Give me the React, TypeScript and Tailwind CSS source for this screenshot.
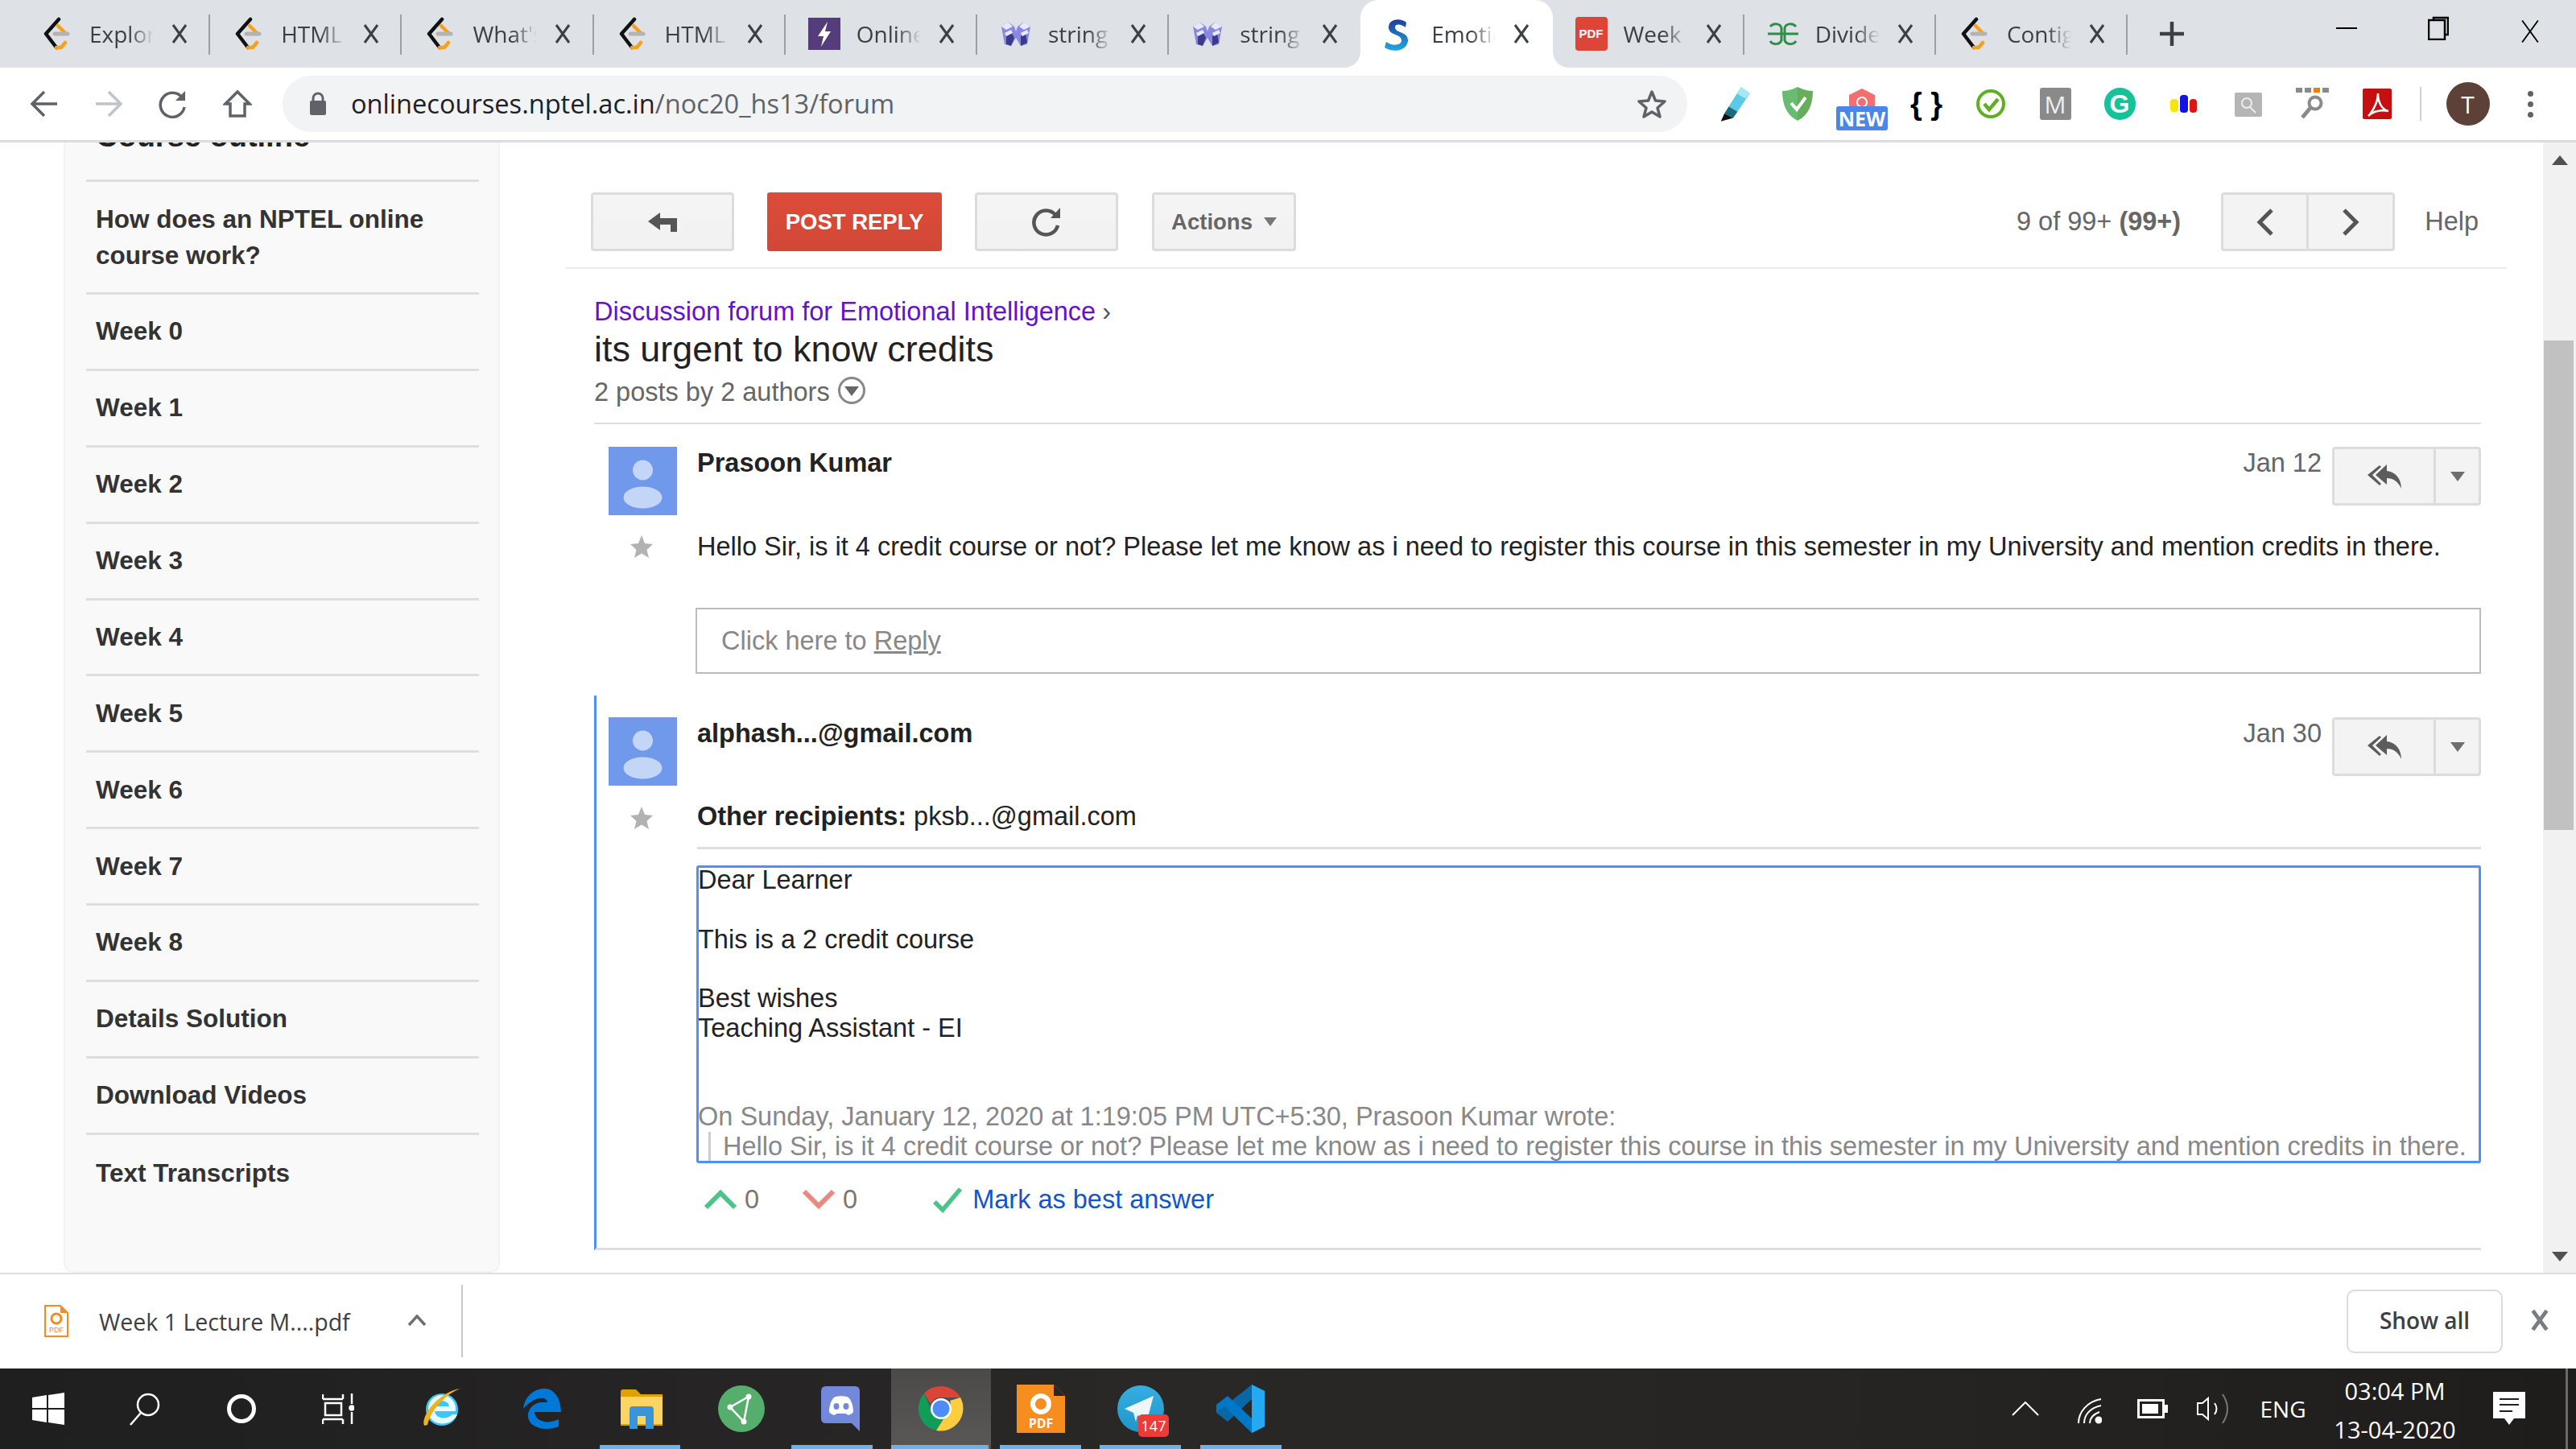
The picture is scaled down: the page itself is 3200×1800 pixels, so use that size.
import React from "react";

const Lc = () => (
  <svg width="38" height="42" viewBox="0 0 38 42" className="shrink-0">
    <path d="M22 3 L6 21 L19 38" fill="none" stroke="#111" strokeWidth="4.5" strokeLinecap="round" strokeLinejoin="round" />
    <path d="M19 38 L25 38 L30 32 M21 11 L30 20" fill="none" stroke="#f89f1b" strokeWidth="4.5" strokeLinecap="round" strokeLinejoin="round" />
    <path d="M17 21 H33" stroke="#b3b3b3" strokeWidth="5" strokeLinecap="round" />
  </svg>
);
const Bolt = () => (
  <svg width="40" height="40" viewBox="0 0 40 40" className="shrink-0">
    <rect width="40" height="40" fill="#553c7b" />
    <path d="M24 5 L12 23 H19 L16 36 L28 17 H21 Z" fill="#fff" />
  </svg>
);
const Str = () => (
  <svg width="40" height="34" viewBox="0 0 40 34" className="shrink-0">
    <path d="M2 8 L10 2 L18 8 L20 14 L22 8 L30 2 L38 8 L34 30 L26 32 L20 22 L14 32 L6 30 Z" fill="#8a87e0" />
    <path d="M8 20 L14 14 L18 22 L14 32 L8 30 Z M26 20 L32 16 L34 28 L26 32 Z" fill="#3b3a8c" />
    <path d="M2 8 L10 2 L16 8 L8 12 Z M24 8 L30 2 L38 8 L30 12 Z M6 16 L14 12 L16 16 L8 20 Z M26 16 L34 12 L36 16 L28 20 Z" fill="#e8e8fb" />
  </svg>
);
const SIcon = () => (
  <svg width="34" height="44" viewBox="0 0 34 44" className="shrink-0">
    <defs>
      <linearGradient id="sg" x1="0" y1="0" x2="0" y2="1">
        <stop offset="0" stopColor="#1f3f9a" />
        <stop offset="1" stopColor="#1fa8e0" />
      </linearGradient>
    </defs>
    <path d="M29 8 C22 2 8 3 7 13 C6 25 24 21 23 31 C22 37 10 37 4 32 L2 39 C10 45 29 45 31 31 C32 18 14 22 15 13 C16 9 23 10 28 14 Z" fill="url(#sg)" />
  </svg>
);
const PdfIcon = () => (
  <div className="w-[40px] h-[42px] shrink-0 rounded-[4px] bg-[#dd4637] flex items-center justify-center text-white text-[15px] font-bold font-['Liberation_Sans','Arial',sans-serif]">PDF</div>
);
const Gfg = () => (
  <svg width="40" height="32" viewBox="0 0 40 32" className="shrink-0" fill="none" stroke="#2f8d46" strokeWidth="3">
    <path d="M1 16 H39" />
    <path d="M4 7 C8 2 17 3 18 9 V24 C16 30 7 30 4 25" />
    <path d="M36 7 C32 2 23 3 22 9 V24 C24 30 33 30 36 25" />
  </svg>
);

const tabs: [string, React.ReactNode, boolean][] = [
  ["Explore", <Lc />, true],
  ["HTML", <Lc />, true],
  ["What's", <Lc />, true],
  ["HTML", <Lc />, true],
  ["Online", <Bolt />, true],
  ["string", <Str />, true],
  ["string", <Str />, false],
  ["Emotional", <SIcon />, false],
  ["Week", <PdfIcon />, true],
  ["Divide", <Gfg />, true],
  ["Contig", <Lc />, true],
];

const CloseX = ({ s = 20, c = "#3c4043", w = 3 }: { s?: number; c?: string; w?: number }) => (
  <svg width={s} height={s + 6} viewBox="0 0 20 26" className="shrink-0">
    <path d="M2 2 L18 24 M18 2 L2 24" stroke={c} strokeWidth={w} fill="none" />
  </svg>
);

const Tab = ({ title, icon, sep, active }: { title: string; icon: React.ReactNode; sep: boolean; active: boolean }) => (
  <div className={"relative w-[238.2px] h-[84px] shrink-0 flex items-center " + (active ? "bg-white rounded-t-[22px]" : "")}>
    {active && (
      <>
        <svg width="22" height="22" viewBox="0 0 22 22" className="absolute left-[-22px] bottom-0">
          <path d="M22 0 V22 H0 C14 22 22 14 22 0 Z" fill="#fff" />
        </svg>
        <svg width="22" height="22" viewBox="0 0 22 22" className="absolute right-[-22px] bottom-0">
          <path d="M0 0 V22 H22 C8 22 0 14 0 0 Z" fill="#fff" />
        </svg>
      </>
    )}
    <div className="w-[88px] pl-[28px] shrink-0 flex items-center">{icon}</div>
    <div className="w-[80px] overflow-hidden whitespace-nowrap text-[28px] text-[#3c4043] font-['Open_Sans',sans-serif] [mask-image:linear-gradient(90deg,#000_62%,transparent_100%)]">{title}</div>
    <div className="ml-[22px]">
      <CloseX />
    </div>
    {sep && <div className="absolute right-0 top-[18px] w-[2px] h-[50px] bg-[#9aa0a6]" />}
  </div>
);

const Ext = ({ children, w = 80 }: { children: React.ReactNode; w?: number }) => (
  <div className="h-[90px] flex items-center justify-center shrink-0" style={{ width: w }}>
    {children}
  </div>
);

const Toolbar = () => (
  <div className="h-[90px] flex items-center bg-white shrink-0">
    <div className="w-[351px] flex shrink-0 pl-[15px]">
      <div className="w-[80px] flex justify-center">
        <svg width="36" height="36" viewBox="0 0 36 36" fill="none" stroke="#5f6368" strokeWidth="3.5">
          <path d="M34 18 H4 M18 3 L3 18 L18 33" />
        </svg>
      </div>
      <div className="w-[80px] flex justify-center">
        <svg width="36" height="36" viewBox="0 0 36 36" fill="none" stroke="#c0c3c7" strokeWidth="3.5">
          <path d="M2 18 H32 M18 3 L33 18 L18 33" />
        </svg>
      </div>
      <div className="w-[79px] flex justify-center">
        <svg width="36" height="36" viewBox="0 0 36 36" fill="none">
          <path d="M29 10 A15 15 0 1 0 32 22" stroke="#5f6368" strokeWidth="3.5" />
          <path d="M33 2 V14 H21 Z" fill="#5f6368" />
        </svg>
      </div>
      <div className="w-[81px] flex justify-center">
        <svg width="36" height="36" viewBox="0 0 36 36" fill="none" stroke="#5f6368" strokeWidth="3.5">
          <path d="M3 18 L18 3 L33 18 H27 V33 H9 V18 Z" />
        </svg>
      </div>
    </div>
    <div className="w-[1745px] h-[70px] shrink-0 rounded-[35px] bg-[#f1f3f4] flex items-center pl-[33px]">
      <svg width="22" height="30" viewBox="0 0 22 30" className="shrink-0">
        <rect x="1" y="11" width="20" height="18" rx="2" fill="#5f6368" />
        <path d="M5 12 V8 A6 6 0 0 1 17 8 V12" fill="none" stroke="#5f6368" strokeWidth="3" />
      </svg>
      <div className="ml-[30px] text-[32.6px] text-[#202124] font-['Open_Sans',sans-serif] whitespace-nowrap">
        onlinecourses.nptel.ac.in<span className="text-[#5f6368]">/noc20_hs13/forum</span>
      </div>
      <div className="ml-auto mr-[25px]">
        <svg width="38" height="36" viewBox="0 0 38 36">
          <path d="M19 3 L23.5 14 L35 15 L26 23 L29 34 L19 28 L9 34 L12 23 L3 15 L14.5 14 Z" fill="none" stroke="#5f6368" strokeWidth="3.5" strokeLinejoin="round" />
        </svg>
      </div>
    </div>
    <div className="flex pl-[17px]">
      <Ext w={80}>
        <svg width="48" height="48" viewBox="0 0 44 44">
          <path d="M31 3 L41 10 L27 31 L17 25 Z" fill="#5cc9e6" />
          <path d="M31 3 L41 10 L36 16 L26 10 Z" fill="#a4e7f5" />
          <path d="M17 25 L27 31 L22 38 L12 33 Z" fill="#1b6b80" />
          <path d="M12 33 L22 38 L8 42 Z" fill="#111" />
        </svg>
      </Ext>
      <Ext w={80}>
        <svg width="40" height="44" viewBox="0 0 40 44">
          <path d="M20 1 C12 5 6 6 1 6 C1 22 6 36 20 43 Z" fill="#68bc71" />
          <path d="M20 1 C28 5 34 6 39 6 C39 22 34 36 20 43 Z" fill="#67ae5c" />
          <path d="M12 21 L19 29 L30 14" stroke="#fff" strokeWidth="4" fill="none" />
        </svg>
      </Ext>
      <Ext w={80}>
        <div className="flex flex-col items-center mt-[14px]">
          <svg width="38" height="22" viewBox="0 0 38 22">
            <path d="M19 0 L35 8 V22 H3 V8 Z" fill="#f36f6f" />
            <circle cx="19" cy="17" r="6" fill="none" stroke="#fff" strokeWidth="2" />
          </svg>
          <div className="w-[64px] h-[30px] bg-[#4a86e8] rounded-[3px] text-white text-[25px] leading-[30px] font-bold text-center font-['Open_Sans',sans-serif]">NEW</div>
        </div>
      </Ext>
      <Ext w={80}>
        <span className="text-[38px] leading-[40px] text-black font-['Liberation_Sans',sans-serif] font-bold">{"{ }"}</span>
      </Ext>
      <Ext w={80}>
        <svg width="38" height="38" viewBox="0 0 38 38">
          <circle cx="19" cy="19" r="16" fill="none" stroke="#5faf1e" strokeWidth="4" />
          <path d="M11 19 L17 26 L28 13" fill="none" stroke="#5faf1e" strokeWidth="4.5" />
        </svg>
      </Ext>
      <Ext w={80}>
        <div className="w-[39px] h-[40px] bg-[#8a8a8a] rounded-[3px] flex items-center justify-center text-[#eee] text-[30px] font-['Open_Sans',sans-serif]">M</div>
      </Ext>
      <Ext w={80}>
        <div className="w-[39px] h-[40px] bg-[#15c39a] rounded-full flex items-center justify-center text-white text-[32px] font-bold font-['Liberation_Sans',sans-serif]">G</div>
      </Ext>
      <Ext w={80}>
        <svg width="36" height="24" viewBox="0 0 36 24">
          <rect x="1" y="6" width="10" height="16" rx="4" fill="#f5e50c" />
          <rect x="13" y="1" width="10" height="22" rx="4" fill="#1414e0" />
          <rect x="25" y="6" width="9" height="17" rx="4" fill="#e01414" />
        </svg>
      </Ext>
      <Ext w={80}>
        <svg width="36" height="34" viewBox="0 0 36 34">
          <rect x="1" y="3" width="34" height="30" rx="2" fill="#b5b5b5" />
          <circle cx="16" cy="16" r="6" fill="none" stroke="#eee" strokeWidth="2" />
          <path d="M20 21 L27 28" stroke="#eee" strokeWidth="2" />
        </svg>
      </Ext>
      <Ext w={80}>
        <svg width="42" height="42" viewBox="0 0 42 42">
          <rect x="0" y="1" width="8" height="6" fill="#8a8a8a" />
          <rect x="11" y="1" width="8" height="6" fill="#8a8a8a" />
          <rect x="22" y="1" width="8" height="6" fill="#f57c00" />
          <rect x="33" y="1" width="8" height="6" fill="#8a8a8a" />
          <circle cx="24" cy="20" r="7.5" fill="none" stroke="#8a8a8a" strokeWidth="4" />
          <path d="M18 26 L8 38" stroke="#8a8a8a" strokeWidth="5" />
        </svg>
      </Ext>
      <Ext w={80}>
        <svg width="38" height="42" viewBox="0 0 38 42">
          <rect x="1" y="2" width="36" height="38" rx="2" fill="#c50f10" />
          <path d="M10 34 C16 26 20 16 20 8 C20 18 24 28 33 30 C24 28 14 30 8 36" fill="none" stroke="#fff" strokeWidth="2.5" />
        </svg>
      </Ext>
    </div>
    <div className="w-[2px] h-[42px] bg-[#d0d2d5] ml-[13px] shrink-0" />
    <div className="w-[115px] flex justify-center shrink-0">
      <div className="w-[54px] h-[54px] rounded-full bg-[#5d4037] flex items-center justify-center text-white text-[30px] font-['Open_Sans',sans-serif]">T</div>
    </div>
    <div className="flex flex-col gap-[6px] ml-[17px] shrink-0">
      <div className="w-[7px] h-[7px] rounded-full bg-[#5f6368]" />
      <div className="w-[7px] h-[7px] rounded-full bg-[#5f6368]" />
      <div className="w-[7px] h-[7px] rounded-full bg-[#5f6368]" />
    </div>
  </div>
);

const weeks = ["Week 0", "Week 1", "Week 2", "Week 3", "Week 4", "Week 5", "Week 6", "Week 7", "Week 8", "Details Solution", "Download Videos"];

const Sidebar = () => (
  <div className="ml-[79px] w-[542px] shrink-0 bg-[#f9f9f9] border-x-[2px] border-b-[2px] border-[#f2f2f2] rounded-b-[12px] overflow-hidden pl-[26px] pr-[24px] text-[#333] font-bold text-[31.5px] font-['Liberation_Sans',Arial,sans-serif]">
    <div className="mt-[-32px] h-[81px] border-b-[3px] border-[#dedede] pl-[12px] pt-[2px] text-[38px] leading-[45px] text-[#222]">Course outline</div>
    <div className="h-[140px] border-b-[3px] border-[#dedede] pl-[12px] flex items-center leading-[45px]">
      How does an NPTEL online course work?
    </div>
    {weeks.map((w, i) => (
      <div key={i} className="h-[94.9px] border-b-[3px] border-[#dedede] pl-[12px] flex items-center">{w}</div>
    ))}
    <div className="h-[94.9px] pl-[12px] flex items-center">Text Transcripts</div>
  </div>
);

const btn = "h-[73px] rounded-[4px] border-[3px] border-[#dcdcdc] bg-[linear-gradient(#f5f5f5,#f1f1f1)] flex items-center justify-center shrink-0";

const Avatar = () => (
  <svg width="85" height="85" viewBox="0 0 85 85" className="shrink-0">
    <rect width="85" height="85" fill="#7099ec" />
    <circle cx="42.5" cy="29" r="12.5" fill="#c4d6f7" />
    <ellipse cx="42.5" cy="63" rx="24" ry="13.5" fill="#c4d6f7" />
  </svg>
);
const Star = () => (
  <svg width="30" height="30" viewBox="0 0 30 30">
    <path d="M15 1 L19 11 L29 12 L21.5 19 L24 29 L15 23.5 L6 29 L8.5 19 L1 12 L11 11 Z" fill="#b2b2b2" />
  </svg>
);
const ReplyBtn = () => (
  <div className={"w-[185px] rounded-[4px] border-[3px] border-[#dcdcdc] h-[73px] bg-[#f3f3f3] flex shrink-0"}>
    <div className="w-[126px] flex items-center justify-center border-r-[3px] border-[#dcdcdc]">
      <svg width="46" height="34" viewBox="0 0 46 34" fill="#5c5c5c">
        <path d="M26 2 L12 15 L26 27 V19 C34 19 40 23 44 32 C44 20 37 11 26 10 Z" />
        <path d="M17 3 L2 15 L17 28 L19 26 L8 15 L19 5 Z" />
      </svg>
    </div>
    <div className="flex-1 flex items-center justify-center">
      <svg width="18" height="12" viewBox="0 0 18 12">
        <path d="M0 0 H18 L9 12 Z" fill="#6e6e6e" />
      </svg>
    </div>
  </div>
);

const Main = () => (
  <div className="ml-[82px] w-[2411px] shrink-0 pt-[62px] font-['Liberation_Sans',Arial,sans-serif] text-[32.5px] text-[#222]">
    <div className="h-[95px] border-b-[2px] border-[#ebebeb] pl-[31px] pr-[35px] flex items-start">
      <div className={btn + " w-[178px]"}>
        <svg width="38" height="26" viewBox="0 0 38 26">
          <path d="M16 1 L1 12 L16 23 V16 H29 V25 H37 V8 H16 Z" fill="#555" />
        </svg>
      </div>
      <div className="w-[217px] h-[73px] ml-[41px] rounded-[3px] bg-[linear-gradient(#dd4b39,#d14836)] text-white font-bold text-[27.5px] flex items-center justify-center shrink-0">POST REPLY</div>
      <div className={btn + " w-[178px] ml-[41px]"}>
        <svg width="38" height="38" viewBox="0 0 38 38" fill="none">
          <path d="M30 10 A15 15 0 1 0 33 23" stroke="#555" strokeWidth="4.5" />
          <path d="M36 1 V14 H24 Z" fill="#555" />
        </svg>
      </div>
      <div className={btn + " w-[179px] ml-[42px] gap-[14px] text-[27.5px] font-bold text-[#666]"}>
        Actions
        <svg width="16" height="11" viewBox="0 0 16 11">
          <path d="M0 0 H16 L8 11 Z" fill="#777" />
        </svg>
      </div>
      <div className="ml-auto h-[73px] flex items-center text-[#666]">
        9 of 99+&nbsp;<b>(99+)</b>
      </div>
      <div className="w-[216px] ml-[50px] h-[73px] rounded-[4px] border-[3px] border-[#dcdcdc] bg-[#f3f3f3] flex shrink-0">
        <div className="w-[106px] border-r-[3px] border-[#dcdcdc] flex items-center justify-center">
          <svg width="24" height="36" viewBox="0 0 24 36" fill="none" stroke="#555" strokeWidth="5">
            <path d="M20 3 L5 18 L20 33" />
          </svg>
        </div>
        <div className="flex-1 flex items-center justify-center">
          <svg width="24" height="36" viewBox="0 0 24 36" fill="none" stroke="#555" strokeWidth="5">
            <path d="M4 3 L19 18 L4 33" />
          </svg>
        </div>
      </div>
      <div className="ml-[37px] h-[73px] flex items-center text-[#666]">Help</div>
    </div>

    <div className="pl-[35px] pr-[32px]">
      <div className="mt-[35px] h-[37px] flex items-center text-[#6611cc] whitespace-nowrap">
        Discussion forum for Emotional Intelligence<span className="ml-[8px] text-[#555]">›</span>
      </div>
      <div className="mt-[3px] h-[50px] flex items-center text-[44.9px] text-[#222]">its urgent to know credits</div>
      <div className="mt-[8px] h-[40px] flex items-center text-[#666]">
        2 posts by 2 authors
        <svg width="36" height="36" viewBox="0 0 36 36" className="ml-[9px] mb-[4px]">
          <circle cx="18" cy="18" r="15.5" fill="#fff" stroke="#888" strokeWidth="3" />
          <path d="M9 13 H27 L18 25 Z" fill="#666" />
        </svg>
      </div>
      <div className="mt-[18px] border-t-[2px] border-[#dedede]" />

      <div className="flex pt-[28px]">
        <div className="w-[128px] pl-[18px] shrink-0 flex flex-col">
          <Avatar />
          <div className="mt-[24px] ml-[26px]">
            <Star />
          </div>
        </div>
        <div className="flex-1">
          <div className="h-[73px] flex items-start">
            <div className="h-[40px] flex items-center font-bold">Prasoon Kumar</div>
            <div className="ml-auto h-[40px] flex items-center text-[#666] mr-[13px]">Jan 12</div>
            <ReplyBtn />
          </div>
          <div className="mt-[31px] h-[40px] flex items-center whitespace-nowrap">Hello Sir, is it 4 credit course or not? Please let me know as i need to register this course in this semester in my University and mention credits in there.</div>
          <div className="mt-[56px] ml-[-2px] h-[82px] border-[2px] border-[#bbb] flex items-center pl-[30px] text-[#888]">
            Click here to&nbsp;<span className="underline">Reply</span>
          </div>
        </div>
      </div>

      <div className="mt-[27px] flex border-l-[3px] border-b-[3px] border-l-[#4d90fe] border-b-[#dedede] pt-[27px]">
        <div className="w-[125px] pl-[15px] shrink-0 flex flex-col">
          <Avatar />
          <div className="mt-[25px] ml-[26px]">
            <Star />
          </div>
        </div>
        <div className="flex-1">
          <div className="h-[73px] flex items-start">
            <div className="h-[40px] flex items-center font-bold">alphash...@gmail.com</div>
            <div className="ml-auto h-[40px] flex items-center text-[#666] mr-[13px]">Jan 30</div>
            <ReplyBtn />
          </div>
          <div className="mt-[30px] h-[40px] flex items-center">
            <b>Other recipients:</b>&nbsp;pksb...@gmail.com
          </div>
          <div className="mt-[18px] border-t-[3px] border-[#dedede]" />
          <div className="mt-[20px] ml-[-1px] h-[370px] border-[3px] border-[#4d90fe] rounded-[3px] overflow-hidden leading-[36.8px] whitespace-nowrap">
            <div className="mt-[-3px] ml-[-1px]">
              <div>Dear Learner</div>
              <div className="h-[36.8px]" />
              <div>This is a 2 credit course</div>
              <div className="h-[36.8px]" />
              <div>Best wishes</div>
              <div>Teaching Assistant - EI</div>
              <div className="h-[73.6px]" />
              <div className="text-[#888]">On Sunday, January 12, 2020 at 1:19:05 PM UTC+5:30, Prasoon Kumar wrote:</div>
              <div className="ml-[13px] border-l-[3px] border-[#ccc] pl-[15px] text-[#888]">Hello Sir, is it 4 credit course or not? Please let me know as i need to register this course in this semester in my University and mention credits in there.</div>
            </div>
          </div>
          <div className="mt-[25px] h-[40px] flex items-center text-[#777] mb-[40px]">
            <svg width="42" height="28" viewBox="0 0 42 28" className="ml-[8px]" fill="none" stroke="#4cc38a" strokeWidth="6">
              <path d="M3 24 L21 6 L39 24" />
            </svg>
            <span className="ml-[9px]">0</span>
            <svg width="42" height="28" viewBox="0 0 42 28" className="ml-[53px]" fill="none" stroke="#e88a80" strokeWidth="6">
              <path d="M3 4 L21 22 L39 4" />
            </svg>
            <span className="ml-[9px]">0</span>
            <svg width="38" height="34" viewBox="0 0 38 34" className="ml-[93px]" fill="none" stroke="#4cc38a" strokeWidth="5.5">
              <path d="M3 20 L13 30 L35 4" />
            </svg>
            <span className="ml-[12px] text-[#1155cc]">Mark as best answer</span>
          </div>
        </div>
      </div>
    </div>
  </div>
);

const Scrollbar = () => (
  <div className="ml-auto w-[41px] shrink-0 bg-[#f1f1f1] flex flex-col">
    <div className="h-[246px] pt-[16px] flex justify-center items-start">
      <svg width="20" height="12" viewBox="0 0 20 12">
        <path d="M10 0 L20 12 H0 Z" fill="#505050" />
      </svg>
    </div>
    <div className="h-[608px] ml-[1px] mr-[3px] bg-[#c1c1c1]" />
    <div className="flex-1 flex items-end justify-center pb-[14px]">
      <svg width="20" height="12" viewBox="0 0 20 12">
        <path d="M0 0 H20 L10 12 Z" fill="#505050" />
      </svg>
    </div>
  </div>
);

const DownloadBar = () => (
  <div className="h-[119px] shrink-0 border-t-[2px] border-[#dedfe3] bg-white flex items-center font-['Open_Sans',sans-serif]">
    <div className="w-[575px] h-[90px] border-r-[2px] border-[#c9c9c9] flex items-center pl-[55px] shrink-0 mt-[-2px]">
      <svg width="30" height="40" viewBox="0 0 30 40" className="shrink-0">
        <path d="M1 1 H20 L29 10 V39 H1 Z" fill="#fff" stroke="#f58a1f" strokeWidth="2" />
        <path d="M20 1 L29 10 H20 Z" fill="#f58a1f" />
        <circle cx="15" cy="17" r="6" fill="none" stroke="#f58a1f" strokeWidth="3" />
        <text x="15" y="34" textAnchor="middle" fontSize="9" fill="#f58a1f" fontFamily="Liberation Sans">PDF</text>
      </svg>
      <div className="ml-[38px] mt-[4px] text-[28.5px] text-[#3c4043] whitespace-nowrap">Week 1 Lecture M....pdf</div>
      <svg width="24" height="14" viewBox="0 0 24 14" className="ml-[71px] mt-[-2px]" fill="none" stroke="#6b6f73" strokeWidth="3.5">
        <path d="M2 13 L12 2 L22 13" />
      </svg>
    </div>
    <div className="ml-auto w-[194px] h-[79px] mt-[-1px] rounded-[10px] border-[2px] border-[#dadce0] flex items-center justify-center text-[28px] font-semibold text-[#3c4043] pb-[3px]">Show all</div>
    <div className="w-[91px] flex justify-center mt-[-4px]">
      <CloseX s={22} c="#7a7d80" w={4.5} />
    </div>
  </div>
);

const Task = ({ w = 124, children, className = "" }: { w?: number; children: React.ReactNode; className?: string }) => (
  <div className={"relative h-[100px] flex items-center justify-center shrink-0 " + className} style={{ width: w }}>
    {children}
  </div>
);
const Ind = ({ l = 12, w = 100 }: { l?: number; w?: number }) => (
  <div className="absolute bottom-0 h-[5px] bg-[#6fb1e4]" style={{ left: l, width: w }} />
);

const Taskbar = () => (
  <div className="h-[100px] shrink-0 flex text-white bg-[linear-gradient(90deg,#1f1f1f_0%,#2a2727_45%,#272424_70%,#1f1d1c_100%)] font-['Open_Sans',sans-serif]">
    <Task w={120}>
      <svg width="40" height="40" viewBox="0 0 40 40" fill="#fff">
        <path d="M0 6 L18 3 V19 H0 Z M20 3 L40 0 V19 H20 Z M0 21 H18 V37 L0 34 Z M20 21 H40 V40 L20 37 Z" />
      </svg>
    </Task>
    <Task w={119}>
      <svg width="40" height="42" viewBox="0 0 40 42" fill="none" stroke="#fff" strokeWidth="2.5">
        <circle cx="24" cy="16" r="13" />
        <path d="M15 26 L2 41" />
      </svg>
    </Task>
    <Task w={121}>
      <svg width="40" height="40" viewBox="0 0 40 40" fill="none">
        <circle cx="20" cy="20" r="15.5" stroke="#fff" strokeWidth="5" />
      </svg>
    </Task>
    <Task w={120}>
      <svg width="40" height="40" viewBox="0 0 40 40" fill="none" stroke="#fff" strokeWidth="2.5">
        <path d="M1 8 V2 M26 8 V2 M1 8 H26 M4 13 H24 V28 H4 Z M1 33 H26 M1 33 V39 M26 33 V39 M37 1 V14 M37 24 V39" />
        <circle cx="37" cy="19" r="2.5" fill="#fff" />
      </svg>
    </Task>
    <div className="w-[7px] shrink-0" />
    <Task>
      <svg width="54" height="54" viewBox="0 0 54 54">
        <circle cx="27" cy="28" r="20" fill="#3dc6f3" />
        <path d="M10 27 A17 17 0 0 1 44 27 V30 H18 C19 40 34 41 40 34 H46 C40 48 20 48 14 40 C10 36 10 30 10 27 Z M18 24 H36 C35 15 20 15 18 24 Z" fill="#e8fbff" />
        <path d="M5 48 C0 35 25 5 50 2 C38 5 14 25 9 47 Z" fill="#f0b11d" />
      </svg>
    </Task>
    <Task>
      <svg width="50" height="52" viewBox="0 0 50 52">
        <path d="M2 26 C4 10 16 1 28 1 C40 1 48 11 49 30 H16 C17 42 32 46 46 39 V48 C30 55 6 50 8 32 C10 24 16 19 24 18 H32 C31 10 16 10 2 26 Z" fill="#0078d7" />
      </svg>
    </Task>
    <Task>
      <svg width="54" height="50" viewBox="0 0 54 50">
        <path d="M1 4 Q1 1 4 1 H20 L26 7 H53 V46 H1 Z" fill="#e0a000" />
        <rect x="1" y="10" width="52" height="34" fill="#fcd462" />
        <path d="M12 50 V26 Q12 22 16 22 H38 Q42 22 42 26 V50 H32 V34 H22 V50 Z" fill="#3a95d8" />
        <rect x="22" y="34" width="10" height="10" fill="#fcd462" />
      </svg>
      <Ind l={10} w={100} />
    </Task>
    <Task>
      <svg width="60" height="60" viewBox="0 0 60 60">
        <circle cx="30" cy="30" r="29" fill="#56ae6c" />
        <path d="M16 28 L39 15 L33 46 Z" fill="none" stroke="#fff" strokeWidth="2.5" />
        <circle cx="16" cy="28" r="3.5" fill="#fff" />
        <circle cx="39" cy="15" r="3.5" fill="#fff" />
        <circle cx="33" cy="46" r="3.5" fill="#fff" />
      </svg>
    </Task>
    <Task>
      <svg width="50" height="56" viewBox="0 0 50 56">
        <path d="M6 0 H42 Q48 0 48 6 V56 L38 46 H6 Q0 46 0 40 V6 Q0 0 6 0 Z" fill="#7289da" />
        <path d="M10 32 C10 22 14 14 18 13 C22 12 28 12 32 13 C36 14 40 22 40 32 C36 37 32 36 31 34 H19 C18 36 14 37 10 32 Z" fill="#fff" />
        <ellipse cx="19" cy="25" rx="3.5" ry="4" fill="#7289da" />
        <ellipse cx="31" cy="25" rx="3.5" ry="4" fill="#7289da" />
      </svg>
      <Ind l={0} w={101} />
    </Task>
    <Task className="bg-[linear-gradient(180deg,#4c4a49,#5a5857)]">
      <svg width="56" height="56" viewBox="0 0 56 56">
        <path d="M28 0 A28 28 0 0 1 52 14 H28 A14 14 0 0 0 15 22 L7 9 A28 28 0 0 1 28 0 Z" fill="#db4437" />
        <path d="M7 9 L18 34 A14 14 0 0 0 31 41 L22 55 A28 28 0 0 1 7 9 Z" fill="#0f9d58" />
        <path d="M52 14 A28 28 0 0 1 22 55 L36 33 A14 14 0 0 0 39 18 Z" fill="#ffcd40" />
        <circle cx="28" cy="28" r="13" fill="#fff" />
        <circle cx="28" cy="28" r="10.5" fill="#4e8cf7" />
      </svg>
      <Ind l={0} w={121} />
    </Task>
    <Task>
      <svg width="60" height="60" viewBox="0 0 60 60">
        <path d="M0 0 H46 L60 14 V60 H0 Z" fill="#f68d1f" />
        <path d="M46 0 L60 14 H46 Z" fill="#2a2626" />
        <circle cx="30" cy="24" r="10" fill="none" stroke="#fff" strokeWidth="6" />
        <text x="30" y="54" textAnchor="middle" fontSize="16" fontWeight="700" fill="#fff" fontFamily="Open Sans">PDF</text>
      </svg>
      <Ind l={11} w={101} />
    </Task>
    <Task>
      <div className="relative w-[58px] h-[58px] rounded-full bg-[linear-gradient(#37aee2,#1e96c8)] flex items-center justify-center">
        <svg width="40" height="36" viewBox="0 0 40 36">
          <path d="M0 18 L36 2 L28 32 L16 26 L14 34 L11 23 Z" fill="#eef6fb" />
        </svg>
        <div className="absolute right-[-6px] bottom-[-6px] w-[38px] h-[28px] rounded-[5px] bg-[#ef3b35] flex items-center justify-center text-[18px] text-white">147</div>
      </div>
      <Ind l={11} w={101} />
    </Task>
    <Task>
      <svg width="60" height="60" viewBox="0 0 60 60">
        <path d="M44 0 L60 8 V52 L44 60 L10 27 L0 35 V25 L14 14 L44 42 Z" fill="#0078c8" />
        <path d="M44 0 L60 8 V52 L44 60 Z" fill="#23aaf2" />
        <path d="M44 0 V18 L14 46 L0 35 Z" fill="#0078c8" opacity="0.8" />
      </svg>
      <Ind l={12} w={101} />
    </Task>
    <div className="ml-auto flex items-center">
      <div className="w-[80px] flex justify-center">
        <svg width="34" height="18" viewBox="0 0 34 18" fill="none" stroke="#fff" strokeWidth="2">
          <path d="M1 17 L17 1 L33 17" />
        </svg>
      </div>
      <div className="w-[80px] flex justify-center mt-[6px]">
        <svg width="30" height="32" viewBox="0 0 30 32" fill="none" stroke="#fff" strokeWidth="2">
          <path d="M1 31 C1 17 12 4 29 1" />
          <path d="M8 31 C8 21 15 12 29 9" />
          <path d="M15 31 C15 25 19 20 27 17" />
          <circle cx="26" cy="27" r="3.5" fill="#fff" />
        </svg>
      </div>
      <div className="w-[76px] flex justify-center">
        <div className="w-[34px] h-[24px] border-[3px] border-white p-[3px]">
          <div className="w-[20px] h-full bg-white" />
        </div>
        <div className="w-[4px] h-[10px] bg-white mt-[7px]" />
      </div>
      <div className="w-[76px] flex justify-center">
        <svg width="42" height="40" viewBox="0 0 42 40" fill="none" stroke="#fff" strokeWidth="2">
          <path d="M1 13 H7 L14 7 V33 L7 27 H1 Z" />
          <path d="M22 13 Q27 20 22 27" />
          <path d="M32 2 Q44 20 32 38" stroke="#777" />
        </svg>
      </div>
      <div className="w-[96px] text-center text-[28px]">ENG</div>
      <div className="w-[174px] flex flex-col items-center text-[29px] leading-[48px] ml-[4px] mt-[4px]">
        <div>03:04 PM</div>
        <div>13-04-2020</div>
      </div>
      <div className="w-[110px] flex justify-center mr-[15px]">
        <svg width="40" height="42" viewBox="0 0 40 42">
          <path d="M0 0 H40 V33 H26 L20 41 L14 33 H0 Z" fill="#fff" />
          <path d="M8 9 H32 M8 16 H32 M8 24 H24" stroke="#222" strokeWidth="2" />
        </svg>
      </div>
      <div className="w-[3px] h-[100px] bg-[#6a6a6a] mr-[10px]" />
    </div>
  </div>
);

export default function App() {
  return (
    <div className="w-[3200px] h-[1800px] flex flex-col overflow-hidden bg-white">
      <div className="relative h-[84px] shrink-0 bg-[#dee1e6] flex pl-[23px]">
        {tabs.map(([t, i, s], k) => (
          <Tab key={k} title={t} icon={i} sep={s} active={k === 7} />
        ))}
        <div className="w-[80px] h-[84px] ml-[4px] flex items-center shrink-0">
          <svg width="32" height="32" viewBox="0 0 32 32" className="ml-[35px] shrink-0">
            <path d="M16 1 V31 M1 16 H31" stroke="#3c4043" strokeWidth="4.5" />
          </svg>
        </div>
        <div className="ml-auto flex items-start pt-[20px]">
          <div className="w-[115px] h-[30px] flex items-center justify-center">
            <div className="w-[26px] h-[2.5px] bg-black" />
          </div>
          <div className="w-[113px] h-[30px] flex items-center justify-center">
            <svg width="26" height="30" viewBox="0 0 26 30" fill="none" stroke="#000" strokeWidth="2.5">
              <path d="M7 5 V2 H25 V23 H21" />
              <rect x="1" y="5" width="20" height="24" />
            </svg>
          </div>
          <div className="w-[115px] h-[30px] flex items-center justify-center mt-[4px]">
            <CloseX s={26} c="#000" w={1.5} />
          </div>
        </div>
      </div>
      <Toolbar />
      <div className="h-[3px] shrink-0 bg-[#dadce0]" />
      <div className="flex-1 min-h-0 flex overflow-hidden bg-white">
        <Sidebar />
        <Main />
        <Scrollbar />
      </div>
      <DownloadBar />
      <Taskbar />
    </div>
  );
}
